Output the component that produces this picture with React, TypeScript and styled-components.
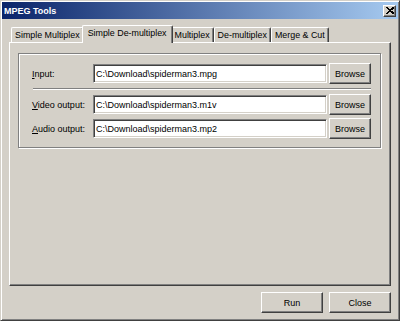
import React from "react";
import styled, { createGlobalStyle } from "styled-components";

const Global = createGlobalStyle`
  html, body { margin: 0; padding: 0; background: #d4d0c8; }
  * { box-sizing: border-box; }
`;

const Window = styled.div`
  width: 400px;
  height: 321px;
  background: #d4d0c8;
  border: 1px solid;
  border-color: #d4d0c8 #404040 #404040 #d4d0c8;
  box-shadow: inset 1px 1px #ffffff, inset -1px -1px #808080;
  padding: 1px;
  display: flex;
  flex-direction: column;
  font-family: "Liberation Sans", Arial, sans-serif;
  font-size: 9px;
  color: #000;
`;

const TitleBar = styled.div`
  height: 17px;
  flex: none;
  display: flex;
  align-items: center;
  padding: 0 2px 0 2px;
  background: linear-gradient(to right, #0a246a, #a6caf0);
`;

const TitleText = styled.span`
  color: #fff;
  font-weight: bold;
  font-size: 9px;
`;

const CaptionButton = styled.div`
  margin-left: auto;
  width: 13px;
  height: 12px;
  background: #d4d0c8;
  border: 1px solid;
  border-color: #ffffff #404040 #404040 #ffffff;
  box-shadow: inset -1px -1px #808080;
  display: flex;
  align-items: center;
  justify-content: center;
`;

const Body = styled.div`
  flex: 1;
  display: flex;
  flex-direction: column;
  padding: 6px 7px 6px 7px;
`;

const TabStrip = styled.div`
  height: 17px;
  flex: none;
  display: flex;
  align-items: flex-end;
  padding-left: 2px;
  position: relative;
  z-index: 1;
  font-size: 8.9px;
`;

const Tab = styled.div<{ $active?: boolean }>`
  height: ${(p) => (p.$active ? 18 : 15)}px;
  margin: ${(p) => (p.$active ? "0 -2px -1px -2px" : "0")};
  padding: ${(p) => (p.$active ? "2px 5px 0" : "0 3px")};
  display: flex;
  align-items: ${(p) => (p.$active ? "flex-start" : "center")};
  background: #d4d0c8;
  border-top: 1px solid #ffffff;
  border-left: 1px solid #ffffff;
  border-right: 1px solid #404040;
  border-radius: 2px 2px 0 0;
  box-shadow: inset -1px 0 #808080;
  white-space: nowrap;
  position: relative;
  z-index: ${(p) => (p.$active ? 2 : 0)};
`;

const Panel = styled.div`
  flex: 1;
  display: flex;
  flex-direction: column;
  border: 1px solid;
  border-color: #ffffff #404040 #404040 #ffffff;
  box-shadow: inset -1px -1px #808080;
  padding: 10px 8px;
`;

const GroupBox = styled.div`
  display: flex;
  flex-direction: column;
  border: 1px solid #808080;
  box-shadow: inset 1px 1px #ffffff, 1px 1px #ffffff;
  padding: 9px 9px 8px 13px;
  margin-right: 1px;
`;

const Row = styled.div<{ $gap?: number }>`
  display: grid;
  grid-template-columns: 61px 1fr 42px;
  align-items: center;
  height: 21px;
  margin-top: ${(p) => p.$gap ?? 0}px;
`;

const Label = styled.label`
  white-space: nowrap;
  u { text-decoration: underline; }
`;

const TextBox = styled.div`
  height: 19px;
  margin-right: 2px;
  background: #ffffff;
  border: 1px solid;
  border-color: #808080 #ffffff #ffffff #808080;
  box-shadow: inset 1px 1px #404040, inset -1px -1px #d4d0c8;
  padding: 0 2px;
  display: flex;
  align-items: center;
  white-space: nowrap;
  overflow: hidden;
`;

const Button = styled.div<{ $w?: number; $h?: number }>`
  width: ${(p) => p.$w ?? 42}px;
  height: ${(p) => p.$h ?? 21}px;
  background: #d4d0c8;
  border: 1px solid;
  border-color: #ffffff #404040 #404040 #ffffff;
  box-shadow: inset -1px -1px #808080;
  display: flex;
  align-items: center;
  justify-content: center;
  white-space: nowrap;
`;

const Separator = styled.div`
  height: 2px;
  margin: 4px 0 4px 1px;
  border-top: 1px solid #808080;
  border-bottom: 1px solid #ffffff;
`;

const ButtonRow = styled.div`
  flex: none;
  display: flex;
  justify-content: flex-end;
  gap: 6px;
  margin-top: 6px;
`;

const CloseX = () => (
  <svg width="8" height="7" viewBox="0 0 8 7">
    <path d="M0.5 0.5 L7 6.5 M1.5 0.5 L8 6.5 M7 0.5 L0.5 6.5 M8 0.5 L1.5 6.5" stroke="#000" strokeWidth="1" shapeRendering="crispEdges" />
  </svg>
);

const rows = [
  { u: "I", post: "nput:", value: "C:\\Download\\spiderman3.mpg" },
  { u: "V", post: "ideo output:", value: "C:\\Download\\spiderman3.m1v" },
  { u: "A", post: "udio output:", value: "C:\\Download\\spiderman3.mp2" },
];

export default function App() {
  const tabs = ["Simple Multiplex", "Simple De-multiplex", "Multiplex", "De-multiplex", "Merge & Cut"];
  return (
    <>
      <Global />
      <Window>
        <TitleBar>
          <TitleText>MPEG Tools</TitleText>
          <CaptionButton>
            <CloseX />
          </CaptionButton>
        </TitleBar>
        <Body>
          <TabStrip>
            {tabs.map((t, i) => (
              <Tab key={t} $active={i === 1}>
                {t}
              </Tab>
            ))}
          </TabStrip>
          <Panel>
            <GroupBox>
              {rows.map((r, i) => (
                <React.Fragment key={r.value}>
                  {i === 1 && <Separator />}
                  <Row $gap={i === 2 ? 3 : 0}>
                    <Label>
                      <u>{r.u}</u>
                      {r.post}
                    </Label>
                    <TextBox>{r.value}</TextBox>
                    <Button>Browse</Button>
                  </Row>
                </React.Fragment>
              ))}
            </GroupBox>
          </Panel>
          <ButtonRow>
            <Button $w={62}>Run</Button>
            <Button $w={62}>Close</Button>
          </ButtonRow>
        </Body>
      </Window>
    </>
  );
}
